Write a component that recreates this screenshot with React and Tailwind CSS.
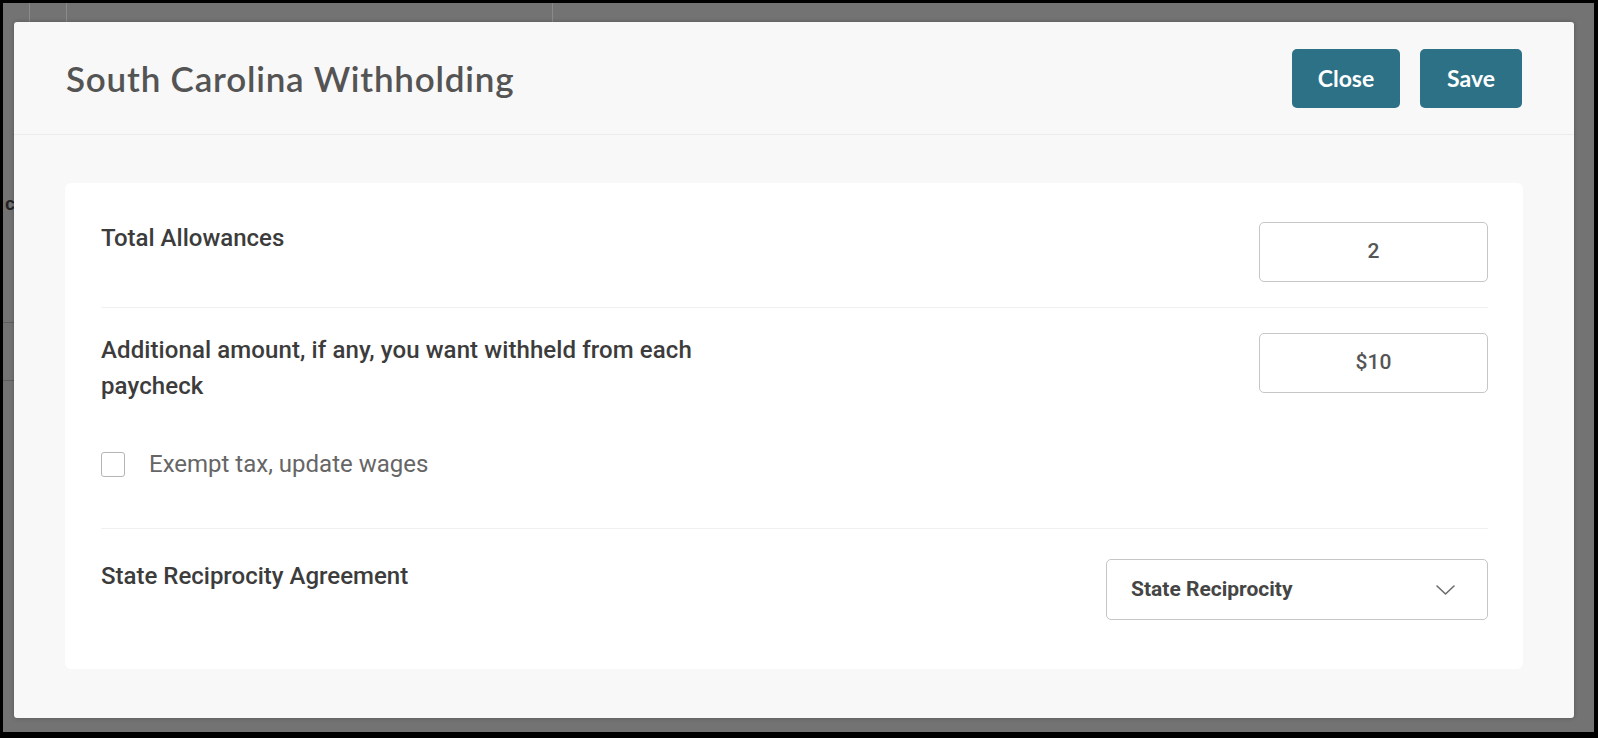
import React from "react";

export default function App() {
  return (
    <div className="w-[1598px] h-[738px] bg-black pt-[3px] pl-[3px] pr-[4px] pb-[6px] overflow-hidden">
      <div className="relative h-full bg-[#737373] pl-[11px] pt-[19px] pr-[20px] pb-[14px]">
        {/* dimmed page fragments behind the overlay */}
        <div className="absolute left-[26px] top-0 h-[19px] w-[1px] bg-[#8a8a8a]" />
        <div className="absolute left-[63px] top-0 h-[19px] w-[1px] bg-[#8a8a8a]" />
        <div className="absolute left-[549px] top-0 h-[19px] w-[1px] bg-[#8a8a8a]" />
        <div className="absolute left-0 top-[319px] h-[1px] w-[11px] bg-[#5e5e5e]" />
        <div className="absolute left-0 top-[377px] h-[1px] w-[11px] bg-[#5e5e5e]" />
        <div className="absolute left-[2px] top-[190px] text-[18px] leading-[22px] font-bold text-[#222] font-['Liberation_Sans',sans-serif]">c</div>

        <div className="relative flex flex-col h-full bg-[#f8f8f8] rounded-[3px] shadow-[0_0_4px_rgba(0,0,0,0.25)]">
          <div className="h-[113px] flex items-center justify-between pl-[52px] pr-[52px] border-b border-[#ececec] shrink-0">
            <h1 className="font-['Lato',sans-serif] font-semibold text-[35px] text-[#545454] tracking-[0.8px]">
              South Carolina Withholding
            </h1>
            <div className="flex gap-[20px]">
              <button className="w-[108px] h-[59px] rounded-[5px] bg-[#2c7186] text-white font-['Lato',sans-serif] font-bold text-[23px]">
                Close
              </button>
              <button className="w-[102px] h-[59px] rounded-[5px] bg-[#2c7186] text-white font-['Lato',sans-serif] font-bold text-[23px]">
                Save
              </button>
            </div>
          </div>

          <div className="flex-1 pl-[51px] pr-[51px] pt-[48px] pb-[49px]">
            <div className="h-full bg-white rounded-[6px] pl-[36px] pr-[35px] font-['Roboto',sans-serif]">
              {/* Row 1 */}
              <div className="flex justify-between items-start pt-[38px] pb-[25px] border-b border-[#f0f0f0]">
                <div className="text-[24px] leading-[34px] font-medium text-[#3c3c3c]">Total Allowances</div>
                <div className="mt-[1px] w-[229px] h-[60px] border-[1.5px] border-[#c6c6c6] rounded-[5px] flex items-center justify-center text-[21px] font-medium text-[#555]">
                  2
                </div>
              </div>

              {/* Row 2 */}
              <div className="flex justify-between items-start pt-[24px] pb-[50px] border-b border-[#f0f0f0]">
                <div className="flex flex-col">
                  <div className="text-[24px] leading-[36px] font-medium text-[#3c3c3c] tracking-[0.1px]">
                    Additional amount, if any, you want withheld from each
                    <br />
                    paycheck
                  </div>
                  <label className="mt-[46px] flex items-center gap-[24px] h-[28px]">
                    <span className="w-[24px] h-[25px] border-[1.5px] border-[#b5b5b5] rounded-[3px] bg-white" />
                    <span className="text-[24px] text-[#666] leading-[28px]">Exempt tax, update wages</span>
                  </label>
                </div>
                <div className="mt-[1px] w-[229px] h-[60px] border-[1.5px] border-[#c6c6c6] rounded-[5px] flex items-center justify-center text-[21px] font-medium text-[#555]">
                  $10
                </div>
              </div>

              {/* Row 3 */}
              <div className="flex justify-between items-start pt-[30px]">
                <div className="text-[24px] leading-[34px] font-medium text-[#3c3c3c]">State Reciprocity Agreement</div>
                <div className="w-[382px] h-[61px] border-[1.5px] border-[#c6c6c6] rounded-[5px] flex items-center justify-between pl-[24px] pr-[32px]">
                  <span className="text-[21px] font-bold text-[#454545]">State Reciprocity</span>
                  <svg width="19" height="10" viewBox="0 0 19 10" fill="none">
                    <path d="M1 1l8.5 8 8.5-8" stroke="#6b6b6b" strokeWidth="1.6" strokeLinecap="round" strokeLinejoin="round" />
                  </svg>
                </div>
              </div>
            </div>
          </div>
        </div>
      </div>
    </div>
  );
}
